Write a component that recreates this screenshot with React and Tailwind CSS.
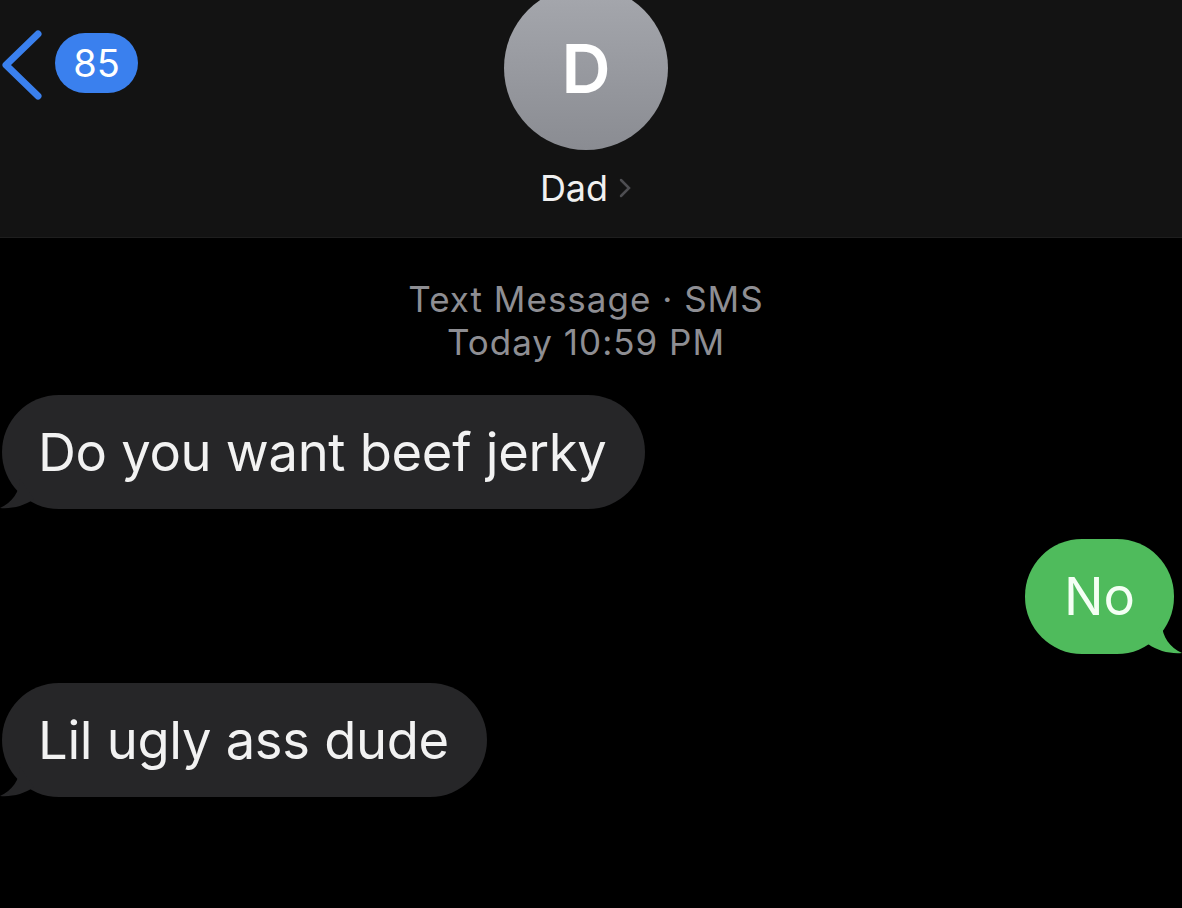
import React from 'react';

const font = { fontFamily: 'Inter, "Liberation Sans", sans-serif' };

const Incoming = ({ text }) => (
    <div className="relative self-start ml-[2px]">
        <div className="bg-[#262628] rounded-[57px] h-[114px] pl-[36px] pr-[38px] flex items-center">
            <span className="text-[52.5px] text-[#f2f2f2] tracking-[-0.3px]">{text}</span>
        </div>
        <svg className="absolute left-[-2px] bottom-0" width="34" height="30" viewBox="0 0 34 30">
            <path d="M20 0 C20 12 12 24 0 29 C12 30 24 27 34 20 Z" fill="#262628" />
        </svg>
    </div>
);

const Outgoing = ({ text }) => (
    <div className="relative self-end mr-[8px]">
        <div className="bg-[#4fbb5c] rounded-[57px] h-[115px] px-[39px] flex items-center">
            <span className="text-[52.5px] text-[#f4fff4]">{text}</span>
        </div>
        <svg className="absolute right-[-8px] bottom-0" width="34" height="30" viewBox="0 0 34 30">
            <path d="M14 0 C14 12 22 24 34 29 C22 30 10 27 0 20 Z" fill="#4fbb5c" />
        </svg>
    </div>
);

const App = () => {
    return (
        <div className="w-[1182px] h-[908px] bg-black overflow-hidden flex flex-col" style={font}>
            {/* header */}
            <div className="h-[238px] bg-[#131313] border-b border-[#1e1e1e] grid grid-cols-[1fr_auto_1fr] pr-[10px]">
                <div className="flex items-start pt-[30px]">
                    <svg width="46" height="70" viewBox="0 0 46 70">
                        <path d="M38 4 L6 35 L38 66" stroke="#3a80ee" strokeWidth="7" fill="none" strokeLinecap="round" strokeLinejoin="round" />
                    </svg>
                    <div className="ml-[9px] mt-[3px] h-[60px] w-[83px] rounded-full bg-[#3a80ee] flex items-center justify-center text-[38px] text-white">
                        85
                    </div>
                </div>
                <div className="flex flex-col items-center">
                    <div className="w-[164px] h-[164px] -mt-[14px] rounded-full bg-gradient-to-b from-[#a6a8ae] to-[#8a8c92] flex items-center justify-center">
                        <span className="text-[68px] font-semibold text-white leading-none">D</span>
                    </div>
                    <div className="mt-[11px] flex items-center gap-[10px]">
                        <span className="text-[36px] text-[#f0f0f0]">Dad</span>
                        <svg width="14" height="22" viewBox="0 0 14 22">
                            <path d="M3 3 L11 11 L3 19" stroke="#4e4e52" strokeWidth="2.5" fill="none" strokeLinecap="round" />
                        </svg>
                    </div>
                </div>
                <div />
            </div>

            {/* meta */}
            <div className="flex flex-col items-center pr-[10px] mt-[40px] text-[#8e8e93] text-[35px] tracking-[1px] leading-[43px]">
                <span>Text Message · SMS</span>
                <span>Today 10:59 PM</span>
            </div>

            {/* messages */}
            <div className="flex flex-col mt-[31px]">
                <Incoming text="Do you want beef jerky" />
                <div className="mt-[30px] flex flex-col">
                    <Outgoing text="No" />
                </div>
                <div className="mt-[29px] flex flex-col">
                    <Incoming text="Lil ugly ass dude" />
                </div>
            </div>
        </div>
    );
};

export default App;
